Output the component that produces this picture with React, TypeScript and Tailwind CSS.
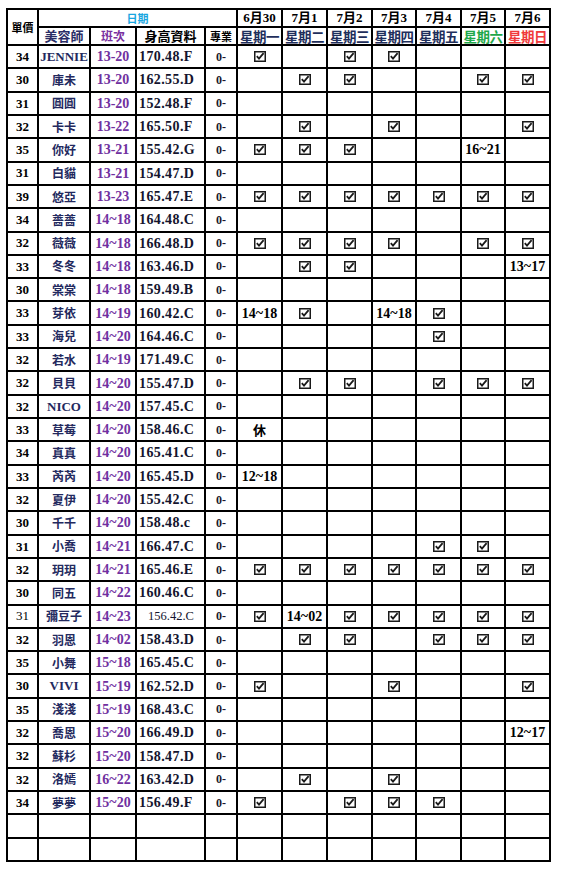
import React from 'react'

const SERIF = "font-['Liberation_Serif','Noto_Sans_CJK_TC',serif]"
const CJK = "font-['Noto_Sans_CJK_TC','Liberation_Serif',sans-serif]"

const DATES = [
  { d: '6月30', w: '星期一', c: 'text-[#1f2f5c]' },
  { d: '7月1', w: '星期二', c: 'text-[#1f2f5c]' },
  { d: '7月2', w: '星期三', c: 'text-[#1f2f5c]' },
  { d: '7月3', w: '星期四', c: 'text-[#1f2f5c]' },
  { d: '7月4', w: '星期五', c: 'text-[#1f2f5c]' },
  { d: '7月5', w: '星期六', c: 'text-[#1fa84a]' },
  { d: '7月6', w: '星期日', c: 'text-[#f03a3a]' },
]

// price, name, shift, body, days (v = checked)
const ROWS: string[][] = [
  ['34', 'JENNIE', '13-20', '170.48.F', 'v,,v,v,,,'],
  ['30', '庫未', '13-20', '162.55.D', ',v,v,,,v,v'],
  ['31', '圓圓', '13-20', '152.48.F', ',,,,,,'],
  ['32', '卡卡', '13-22', '165.50.F', ',v,,v,,,v'],
  ['35', '你好', '13-21', '155.42.G', 'v,v,v,,,16~21,'],
  ['31', '白貓', '13-21', '154.47.D', ',,,,,,'],
  ['39', '悠亞', '13-23', '165.47.E', 'v,v,v,v,v,v,v'],
  ['34', '薔薔', '14~18', '164.48.C', ',,,,,,'],
  ['32', '薇薇', '14~18', '166.48.D', 'v,v,v,v,,v,v'],
  ['33', '冬冬', '14~18', '163.46.D', ',v,v,,,,13~17'],
  ['30', '棠棠', '14~18', '159.49.B', ',,,,,,'],
  ['33', '芽依', '14~19', '160.42.C', '14~18,v,,14~18,v,,'],
  ['33', '海兒', '14~20', '164.46.C', ',,,,v,,'],
  ['32', '若水', '14~19', '171.49.C', ',,,,,,'],
  ['32', '貝貝', '14~20', '155.47.D', ',v,v,,v,v,v'],
  ['32', 'NICO', '14~20', '157.45.C', ',,,,,,'],
  ['33', '草莓', '14~20', '158.46.C', '休,,,,,,'],
  ['34', '真真', '14~20', '165.41.C', ',,,,,,'],
  ['33', '芮芮', '14~20', '165.45.D', '12~18,,,,,,'],
  ['32', '夏伊', '14~20', '155.42.C', ',,,,,,'],
  ['30', '千千', '14~20', '158.48.c', ',,,,,,'],
  ['31', '小喬', '14~21', '166.47.C', ',,,,v,v,'],
  ['32', '玥玥', '14~21', '165.46.E', 'v,v,v,v,v,v,v'],
  ['30', '同五', '14~22', '160.46.C', ',,,,,,'],
  ['31', '彌豆子', '14~23', '156.42.C', 'v,14~02,v,v,v,v,v'],
  ['32', '羽恩', '14~02', '158.43.D', ',v,v,,v,v,v'],
  ['35', '小舞', '15~18', '165.45.C', ',,,,,,'],
  ['30', 'VIVI', '15~19', '162.52.D', 'v,,,v,,,v'],
  ['35', '淺淺', '15~19', '168.43.C', ',,,,,,'],
  ['32', '喬恩', '15~20', '166.49.D', ',,,,,,12~17'],
  ['32', '蘇杉', '15~20', '158.47.D', ',,,,,,'],
  ['32', '洛嫣', '16~22', '163.42.D', ',v,,v,,,'],
  ['34', '夢夢', '15~20', '156.49.F', 'v,,v,v,v,,'],
  ['', '', '', '', ',,,,,,'],
  ['', '', '', '', ',,,,,,'],
]

const cell = 'flex items-center justify-center whitespace-nowrap bg-white'

function Check() {
  return (
    <svg width="12" height="11" viewBox="0 0 12 11" className="block">
      <rect x="0.75" y="0.75" width="10.5" height="9.5" fill="none" stroke="#1a1a1a" strokeWidth="1.5" />
      <path d="M2.8 5.2 L5 7.6 L9.6 2.2" fill="none" stroke="#1a1a1a" strokeWidth="1.8" />
    </svg>
  )
}

function DayCell({ v }: { v: string }) {
  if (!v) return <div className={cell} />
  if (v === 'v')
    return (
      <div className={cell}>
        <Check />
      </div>
    )
  if (v === '休') return <div className={`${cell} ${CJK} text-[13px] font-bold text-black`}>休</div>
  return <div className={`${cell} ${SERIF} text-[14px] font-bold text-black`}>{v}</div>
}

export default function App() {
  return (
    <div className="min-h-[872px] bg-white pl-[6px] pt-[8px]">
      <div className="grid h-[854px] w-fit grid-cols-[29px_50px_44px_67px_30px_43px_43px_43px_42px_43px_42px_43px] grid-rows-[16px_16px_repeat(35,minmax(0,1fr))] gap-[2px] bg-black p-[2px]">
        {/* header */}
        <div className={`${cell} ${CJK} row-span-2 text-[11px] font-bold text-black`}>單價</div>
        <div className={`${cell} ${CJK} col-span-4 text-[11px] font-bold text-[#19a6e0]`}>日期</div>
        {DATES.map((x) => (
          <div key={x.d} className={`${cell} ${SERIF} text-[13px] font-bold text-black`}>
            {x.d}
          </div>
        ))}
        <div className={`${cell} ${CJK} text-[13px] font-semibold text-[#2a2d66]`}>美容師</div>
        <div className={`${cell} ${CJK} text-[12px] font-semibold text-[#7a2fa0]`}>班次</div>
        <div className={`${cell} ${CJK} text-[13px] font-semibold text-black`}>身高資料</div>
        <div className={`${cell} ${CJK} text-[11px] font-semibold text-black`}>專業</div>
        {DATES.map((x) => (
          <div key={x.w} className={`${cell} ${CJK} text-[13.5px] font-bold tracking-[-0.5px] ${x.c}`}>
            {x.w}
          </div>
        ))}

        {/* rows */}
        {ROWS.map((r, i) => {
          const plain = r[1] === '彌豆子'
          const days = r[4].split(',')
          const latin = /^[A-Z]+$/.test(r[1])
          return (
            <React.Fragment key={i}>
              <div className={`${cell} ${SERIF} text-[13px] text-black ${plain ? 'font-normal' : 'font-bold'}`}>
                {r[0]}
              </div>
              <div
                className={`${cell} text-[#23295e] ${
                  latin ? `${SERIF} text-[13px] font-bold` : `${CJK} text-[12px] font-semibold`
                }`}
              >
                {r[1]}
              </div>
              <div className={`${cell} ${SERIF} text-[14px] font-bold text-[#7030a0]`}>{r[2]}</div>
              <div
                className={`flex items-center whitespace-nowrap bg-white ${SERIF} text-[#14142e] ${
                  plain ? 'pl-[11px] text-[12.5px] font-normal' : 'pl-[2px] text-[14px] font-bold tracking-[0.4px]'
                }`}
              >
                {r[3]}
              </div>
              <div className={`${cell} ${SERIF} text-[12px] font-bold text-[#1a1a2e]`}>{r[0] ? '0-' : ''}</div>
              {days.map((d, j) => (
                <DayCell key={j} v={d} />
              ))}
            </React.Fragment>
          )
        })}
      </div>
    </div>
  )
}
